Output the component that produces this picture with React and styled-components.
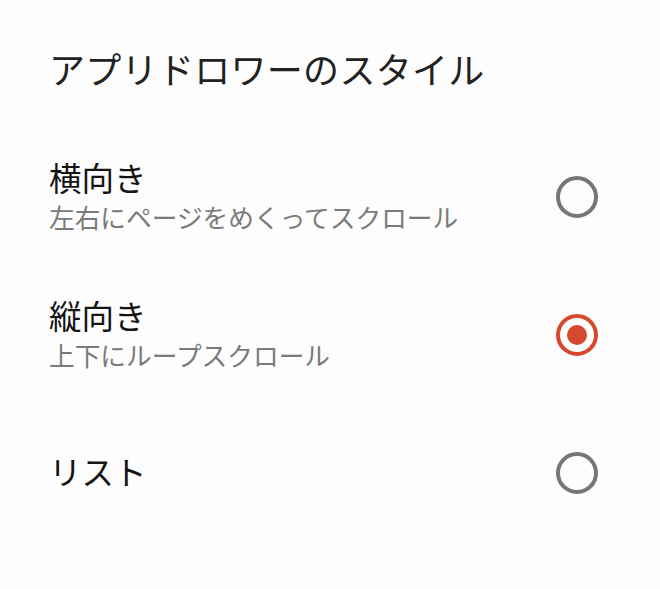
import React, { useState } from "react";
import styled, { createGlobalStyle } from "styled-components";

const Global = createGlobalStyle`
  html, body { margin: 0; padding: 0; background: #fdfdfd; }
  body { font-family: "Noto Sans CJK JP", "Noto Sans", sans-serif; }
`;

const Page = styled.div`
  width: 660px;
  height: 589px;
  box-sizing: border-box;
  padding: 0 62px 0 49px;
  display: flex;
  flex-direction: column;
`;

const Heading = styled.h1`
  margin: 0;
  height: 128px;
  display: flex;
  align-items: center;
  padding-top: 8px;
  box-sizing: border-box;
  font-size: 36px;
  font-weight: 400;
  color: #222;
  letter-spacing: 0.3px;
`;

const Row = styled.label`
  height: 138px;
  display: flex;
  align-items: center;
  justify-content: space-between;
  cursor: pointer;
`;

const Texts = styled.div`
  display: flex;
  flex-direction: column;
  margin-top: ${(p) => (p.$single ? "-5px" : "0")};
`;

const Title = styled.div`
  font-size: 32.5px;
  line-height: 40px;
  color: #141414;
`;

const Subtitle = styled.div`
  font-size: 25.7px;
  line-height: 40px;
  color: #7a7a7a;
`;

const Radio = styled.span`
  width: 42px;
  height: 42px;
  box-sizing: border-box;
  border-radius: 50%;
  border: 4px solid ${(p) => (p.$on ? "#d5492e" : "#767676")};
  display: flex;
  align-items: center;
  justify-content: center;
  &::after {
    content: "";
    width: 20px;
    height: 20px;
    border-radius: 50%;
    background: #d5492e;
    display: ${(p) => (p.$on ? "block" : "none")};
  }
`;

const options = [
  { id: "h", title: "横向き", sub: "左右にページをめくってスクロール" },
  { id: "v", title: "縦向き", sub: "上下にループスクロール" },
  { id: "l", title: "リスト" },
];

export default function App() {
  const [sel, setSel] = useState("v");
  return (
    <Page>
      <Global />
      <Heading>アプリドロワーのスタイル</Heading>
      {options.map((o) => (
        <Row key={o.id} onClick={() => setSel(o.id)}>
          <Texts $single={!o.sub}>
            <Title>{o.title}</Title>
            {o.sub && <Subtitle>{o.sub}</Subtitle>}
          </Texts>
          <Radio $on={sel === o.id} />
        </Row>
      ))}
    </Page>
  );
}
